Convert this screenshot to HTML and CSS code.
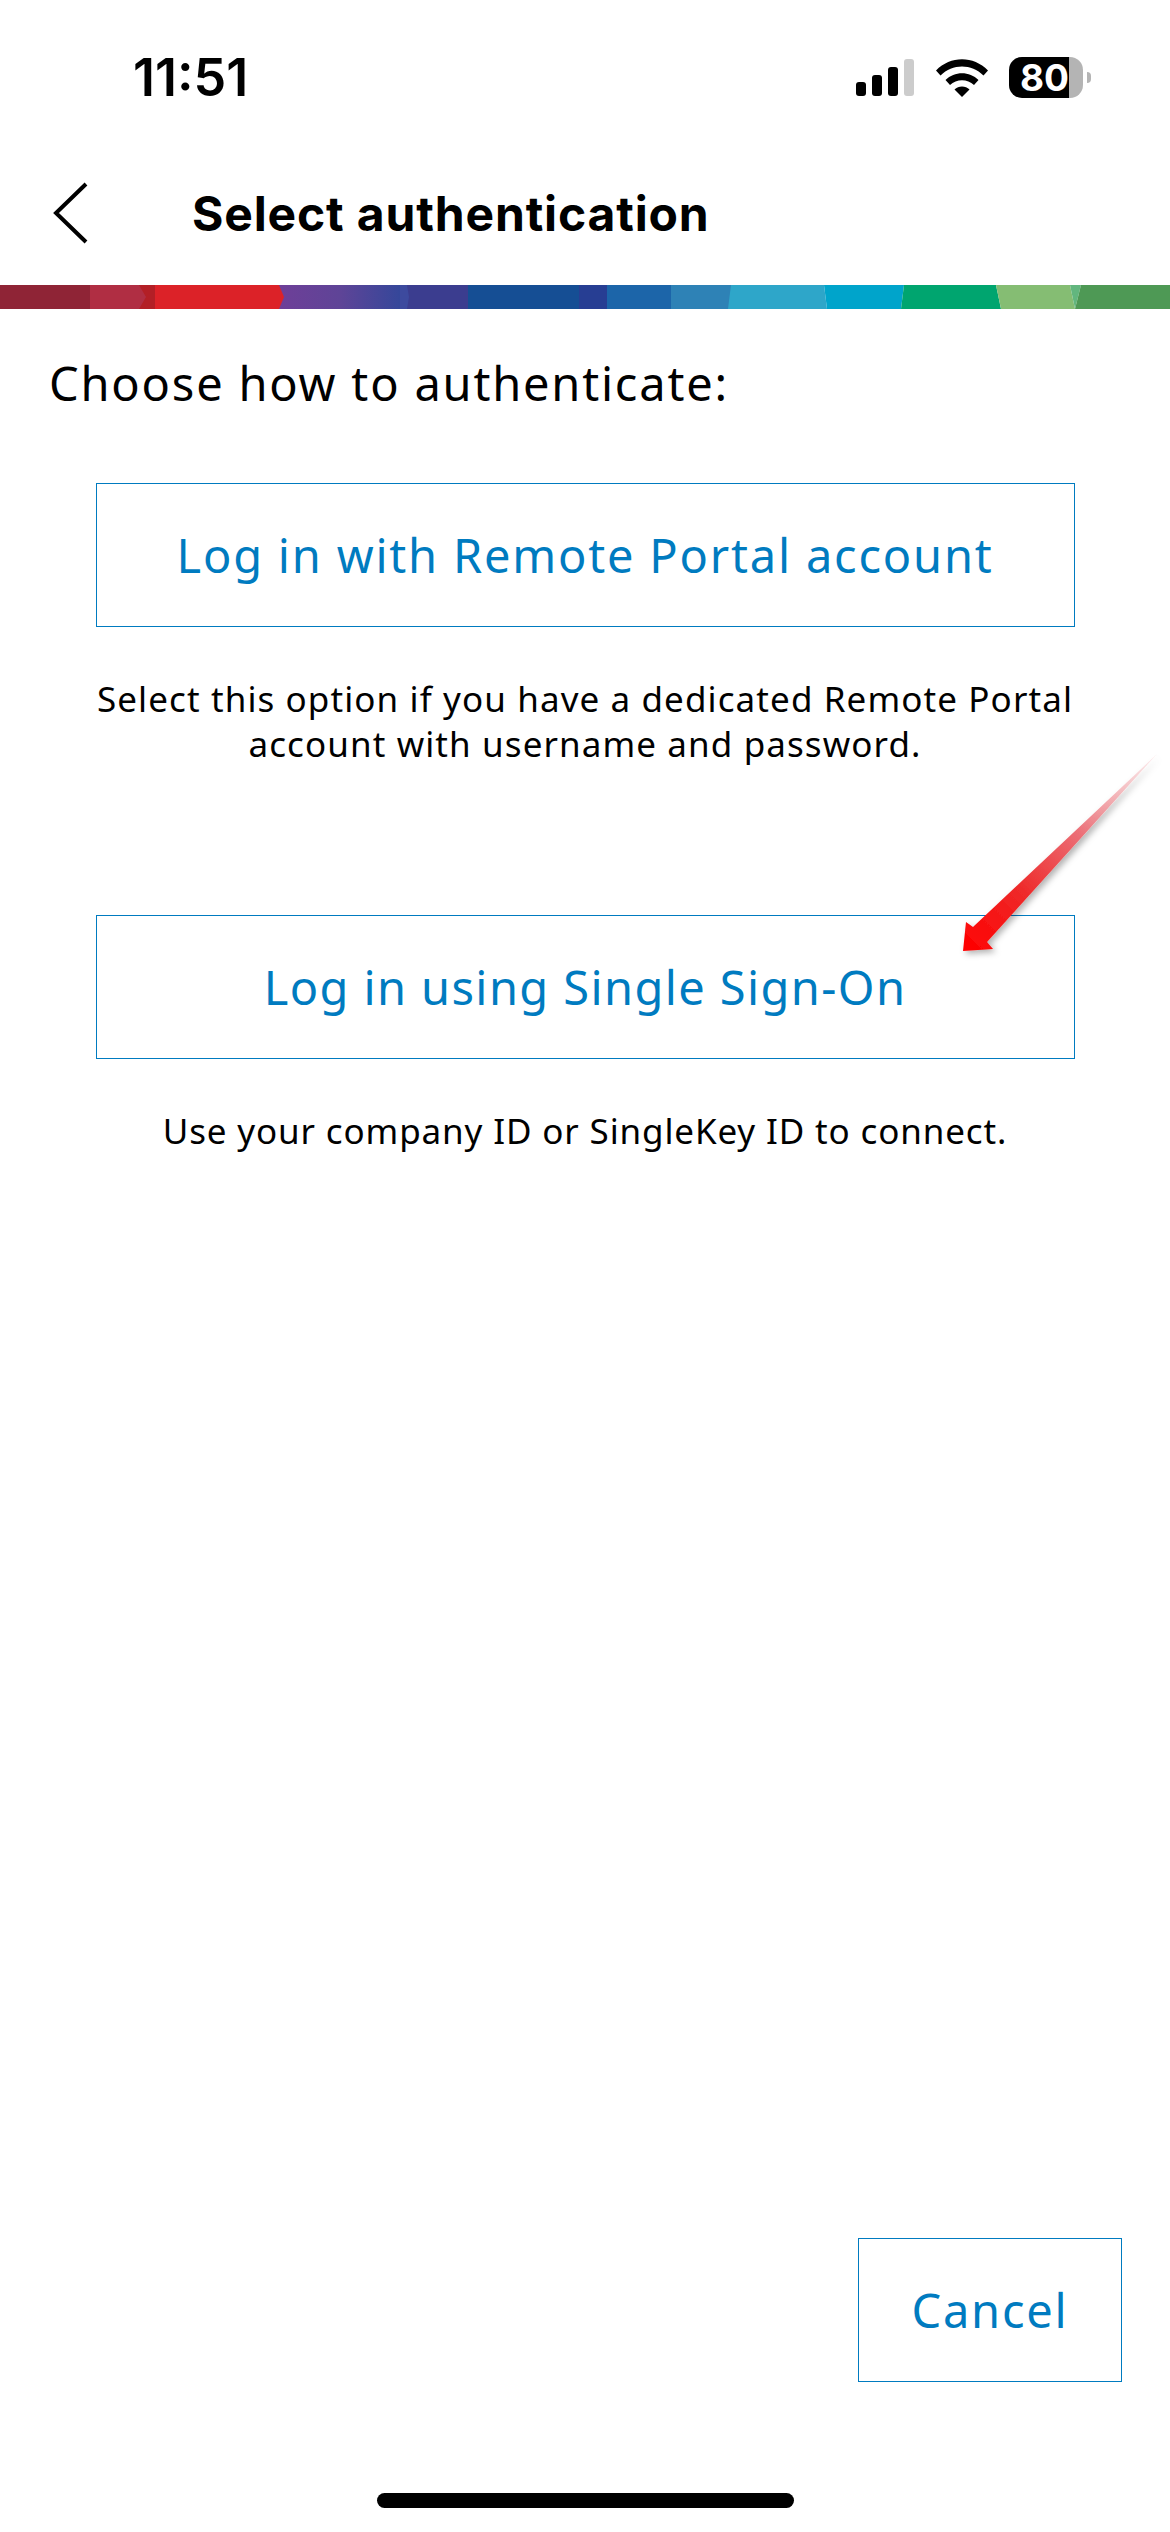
FILE: index.html
```html
<!DOCTYPE html>
<html lang="en">
<head>
<meta charset="utf-8">
<title>Select authentication</title>
<link rel="stylesheet" href="styles.css">
</head>
<body>
<div class="screen">
  <div class="status">
    <span class="time">11:51</span>
    <div class="status-icons">
      <svg class="signal" width="58" height="37" viewBox="0 0 58 37">
        <rect x="0" y="23" width="10" height="14" rx="3" fill="#000"/>
        <rect x="16" y="16" width="10" height="21" rx="3" fill="#000"/>
        <rect x="32" y="8" width="10" height="29" rx="3" fill="#000"/>
        <rect x="48" y="0" width="10" height="37" rx="3" fill="#ccc"/>
      </svg>
      <svg class="wifi" width="52" height="38" viewBox="0 0 52 38">
        <path d="M0 11.500C14.500-3.500 37.500-3.500 52 11.500L47.500 16.500C35.500 4.500 16.500 4.500 4.500 16.500Z" fill="#000"/>
        <path d="M9.500 21C18.500 12 33.500 12 42.500 21L38 26C31.500 19.500 20.500 19.500 14 26Z" fill="#000"/>
        <path d="M18.500 30.500C22.500 26.500 29.500 26.500 33.500 30.500L26 38Z" fill="#000"/>
      </svg>
      <div class="battery">
        <div class="battery-body"><span class="battery-level">80</span></div>
        <span class="battery-nub"></span>
      </div>
    </div>
  </div>

  <header class="nav">
    <svg class="back" width="36" height="62" viewBox="0 0 36 62">
      <path d="M33 2L3 31L33 60" fill="none" stroke="#000" stroke-width="4"/>
    </svg>
    <h1 class="title">Select authentication</h1>
  </header>

  <svg class="stripe" width="1170" height="24" viewBox="0 0 1170 24" preserveAspectRatio="none">
    <defs>
      <linearGradient id="violet" x1="0" x2="1" y1="0" y2="0">
        <stop offset="0" stop-color="#6e3f98"/>
        <stop offset="0.5" stop-color="#5f4497"/>
        <stop offset="1" stop-color="#35479a"/>
      </linearGradient>
    </defs>
    <rect x="0" width="90" height="24" fill="#8f2436"/>
    <rect x="90" width="57" height="24" fill="#b02e43"/>
    <polygon points="139,0 155,0 155,24 139,24 146,12" fill="#b31f26"/>
    <rect x="155" width="130" height="24" fill="#dc2228"/>
    <polygon points="279,0 400,0 400,24 279,24 284,12" fill="url(#violet)"/>
    <rect x="400" width="10" height="24" fill="#3d4a9e"/>
    <polygon points="407,0 468,0 468,24 407,24 409,12" fill="#3b3d8f"/>
    <rect x="468" width="111" height="24" fill="#154e94"/>
    <rect x="579" width="29" height="24" fill="#273e93"/>
    <rect x="607" width="65" height="24" fill="#1c65a9"/>
    <rect x="671" width="60" height="24" fill="#2e82b6"/>
    <polygon points="731,0 824,0 827,24 728,24" fill="#2ea6c9"/>
    <polygon points="824,0 904,0 901,24 827,24" fill="#00a4cb"/>
    <polygon points="904,0 996,0 1001,24 901,24" fill="#00a56f"/>
    <polygon points="996,0 1070,0 1075,24 1001,24" fill="#85bd73"/>
    <polygon points="1070,0 1081,0 1075,24" fill="#62b67e"/>
    <polygon points="1081,0 1170,0 1170,24 1075,24" fill="#4e9955"/>
  </svg>

  <main class="content">
    <p class="prompt">Choose how to authenticate:</p>
    <section class="option option-first">
      <button class="btn btn-wide" type="button">Log in with Remote Portal account</button>
      <p class="hint">Select this option if you have a dedicated Remote Portal<br>account with username and password.</p>
    </section>
    <section class="option option-second">
      <button class="btn btn-wide" type="button">Log in using Single Sign-On</button>
      <p class="hint">Use your company ID or SingleKey ID to connect.</p>
    </section>
  </main>

  <footer class="footer">
    <button class="btn btn-cancel" type="button">Cancel</button>
  </footer>
  <div class="home-row"><span class="home-bar"></span></div>

  <svg class="arrow" width="220" height="220" viewBox="950 745 220 220">
    <defs>
      <linearGradient id="arrowFill" gradientUnits="userSpaceOnUse" x1="965" y1="950" x2="1157" y2="754">
        <stop offset="0" stop-color="#ff0000"/>
        <stop offset="0.3" stop-color="#ee2a2a"/>
        <stop offset="0.6" stop-color="#ec7078"/>
        <stop offset="1" stop-color="#f8d8da" stop-opacity="0.5"/>
      </linearGradient>
      <filter id="arrowShadow" x="-20%" y="-20%" width="140%" height="140%">
        <feDropShadow dx="3" dy="3" stdDeviation="3" flood-color="#000" flood-opacity="0.3"/>
      </filter>
    </defs>
    <path d="M1157 754L987 942L993 949L963 951L966 922L973 927Z" fill="url(#arrowFill)" filter="url(#arrowShadow)"/>
  </svg>
</div>
</body>
</html>
```
FILE: styles.css
```css
* { box-sizing: border-box; }
html, body { margin: 0; padding: 0; background: #fff; }
body { font-family: "Noto Sans", "Liberation Sans", sans-serif; color: #000; }
.screen { position: relative; width: 1170px; height: 2532px; display: flex; flex-direction: column; overflow: hidden; background: #fff; }

.status { height: 157px; flex: none; display: flex; justify-content: space-between; align-items: flex-start; padding: 48px 79px 0 133px; }
.time { font-family: Inter, sans-serif; font-weight: 600; font-size: 52px; line-height: 60px; letter-spacing: 0; }
.status-icons { display: flex; align-items: center; padding-top: 9px; }
.signal { display: block; margin-right: 22px; }
.wifi { display: block; margin-right: 21px; }
.battery { display: flex; align-items: center; }
.battery-body { width: 74px; height: 41px; border-radius: 13px; background: linear-gradient(90deg, #000 0, #000 60px, #b4b4b4 60px, #b4b4b4 100%); display: flex; align-items: center; padding-left: 11px; }
.battery-level { color: #fff; font-family: Inter, sans-serif; font-weight: 700; font-size: 37px; line-height: 41px; letter-spacing: 0; }
.battery-nub { width: 4px; height: 11px; margin-left: 4px; border-radius: 0 6px 6px 0; background: #b4b4b4; }

.nav { height: 128px; flex: none; display: flex; align-items: center; padding: 0 0 16px 53px; }
.back { display: block; flex: none; margin-right: 103px; }
.title { margin: 0; padding-top: 2px; font-family: Inter, sans-serif; font-size: 48px; font-weight: 700; line-height: 60px; letter-spacing: 0.85px; }

.stripe { display: block; flex: none; }

.content { flex: none; padding: 44px 0 0; }
.prompt { margin: 0 0 0 49px; font-size: 47px; line-height: 60px; letter-spacing: 1.8px; }
.option { display: flex; flex-direction: column; align-items: center; }
.option-first { margin-top: 70px; }
.option-second { margin-top: 149px; }
.option-second .btn { letter-spacing: 1.4px; }
.option-second .hint { letter-spacing: 0.86px; }
.btn { background: #fff; border: 1px solid #007bc0; border-radius: 0; color: #007bc0; font-family: inherit; font-size: 47px; line-height: 58px; letter-spacing: 1.8px; padding: 0; cursor: pointer; }
.btn-wide { width: 979px; height: 144px; }
.hint { margin: 49px 0 0; text-align: center; font-size: 35px; line-height: 45px; letter-spacing: 1.1px; }

.footer { flex: 1; display: flex; justify-content: flex-end; align-items: flex-end; padding-right: 48px; }
.btn-cancel { width: 264px; height: 144px; }
.home-row { height: 150px; flex: none; display: flex; justify-content: center; padding-top: 111px; }
.home-bar { width: 417px; height: 15px; border-radius: 8px; background: #000; }

.arrow { position: absolute; left: 950px; top: 745px; pointer-events: none; }
```
